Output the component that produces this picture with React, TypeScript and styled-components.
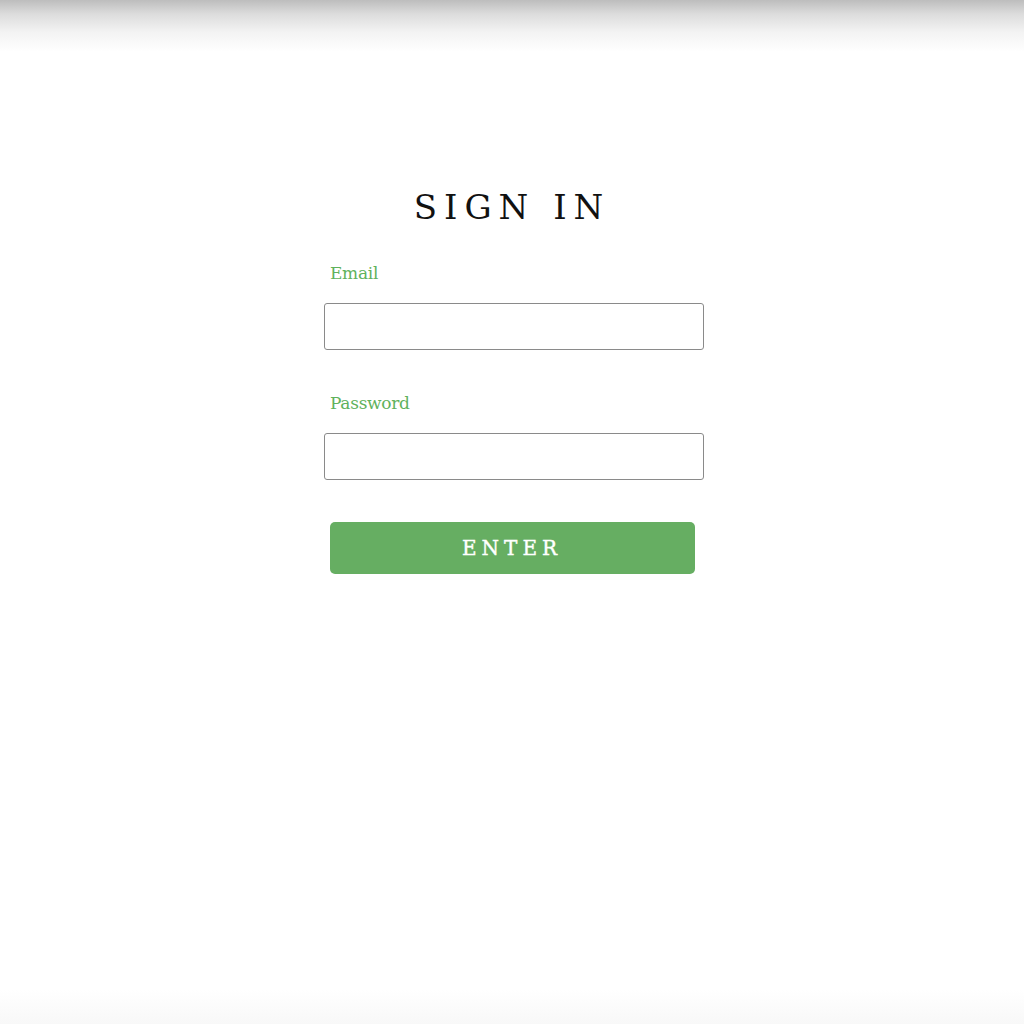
import React from 'react';
import styled, { createGlobalStyle } from 'styled-components';

const GlobalStyle = createGlobalStyle`
  html, body {
    margin: 0;
    padding: 0;
    background: #fff;
  }
  body {
    font-family: "DejaVu Serif", "Liberation Serif", serif;
  }
`;

const Page = styled.div`
  min-height: 1024px;
  padding-left: 4px;
  box-sizing: border-box;
  background:
    linear-gradient(to bottom, #bdbdbd 0px, #dcdcdc 14px, #f3f3f3 32px, #ffffff 52px, #ffffff 990px, #f8f8f8 1024px);
  display: flex;
  justify-content: center;
`;

const Form = styled.form`
  width: 380px;
  margin-top: 186px;
  display: flex;
  flex-direction: column;
`;

const Title = styled.h1`
  margin: 0 0 35px;
  padding-right: 4px;
  text-align: center;
  font-family: "DejaVu Serif", serif;
  font-weight: normal;
  font-size: 34px;
  line-height: 42px;
  letter-spacing: 7px;
  color: #111;
`;

const Field = styled.div`
  display: flex;
  flex-direction: column;
  margin-bottom: 43px;
`;

const Label = styled.label`
  color: #5fb25c;
  font-size: 17px;
  line-height: 20px;
  padding-left: 6px;
  margin-bottom: 20px;
  font-family: "DejaVu Serif", serif;
  letter-spacing: -0.3px;
`;

const Input = styled.input`
  box-sizing: border-box;
  width: 380px;
  height: 47px;
  border: 1px solid #8a8a8a;
  border-radius: 3px;
  background: #fff;
  padding: 0 10px;
  font-size: 16px;
  font-family: inherit;
  outline: none;
`;

const Button = styled.button`
  align-self: flex-start;
  margin: -1px 0 0 6px;
  width: 365px;
  height: 52px;
  border: none;
  border-radius: 5px;
  background: #66ae62;
  color: #fff;
  font-family: "DejaVu Serif", serif;
  font-size: 20px;
  font-weight: 500;
  letter-spacing: 5px;
  padding-left: 5px;
  cursor: pointer;
  -webkit-text-stroke: 0.4px #fff;
`;

export default function App() {
  return (
    <>
      <GlobalStyle />
      <Page>
        <Form onSubmit={(e) => e.preventDefault()}>
          <Title>SIGN IN</Title>
          <Field>
            <Label htmlFor="email">Email</Label>
            <Input id="email" type="email" />
          </Field>
          <Field>
            <Label htmlFor="password">Password</Label>
            <Input id="password" type="password" />
          </Field>
          <Button type="submit">ENTER</Button>
        </Form>
      </Page>
    </>
  );
}
